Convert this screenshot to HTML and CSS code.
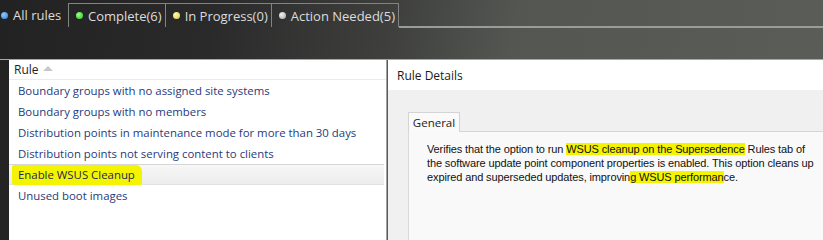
FILE: index.html
```html
<!DOCTYPE html>
<html>
<head>
<meta charset="utf-8">
<link rel="stylesheet" href="styles.css">
</head>
<body>
<div class="app">
  <div class="strip">
    <div class="tab tab-first"><span class="dot dot-blue"></span>All rules</div>
    <div class="tab tab-boxed"><span class="dot dot-green"></span>Complete(6)</div>
    <div class="tab tab-boxed"><span class="dot dot-yellow"></span>In Progress(0)</div>
    <div class="tab tab-boxed"><span class="dot dot-gray"></span>Action Needed(5)</div>
    <div class="strip-fill"></div>
  </div>
  <div class="band"></div>
  <div class="main">
    <div class="gutter"></div>
    <div class="list">
      <div class="list-head">Rule <span class="sort"></span></div>
      <div class="row">Boundary groups with no assigned site systems</div>
      <div class="row">Boundary groups with no members</div>
      <div class="row">Distribution points in maintenance mode for more than 30 days</div>
      <div class="row">Distribution points not serving content to clients</div>
      <div class="row row-selected"><span class="mark mark-row">Enable WSUS Cleanup</span></div>
      <div class="row">Unused boot images</div>
    </div>
    <div class="details">
      <div class="details-head">Rule Details</div>
      <div class="details-body">
        <div class="gtabs">
          <div class="gtab">General</div>
          <div class="gtab-fill"></div>
        </div>
        <div class="gcontent">
          <p class="desc">Verifies that the option to run <span class="mark">WSUS cleanup on the Supersedence</span> Rules tab of<br>the software update point component properties is enabled. This option cleans up<br>expired and superseded updates, improvin<span class="mark">g WSUS performan</span>ce.</p>
        </div>
      </div>
    </div>
  </div>
</div>
</body>
</html>
```

FILE: styles.css
```css
html, body {
  margin: 0;
  padding: 0;
}
body {
  width: 823px;
  height: 100vh;
  overflow: hidden;
  background: linear-gradient(100deg, #222222 0%, #2a2a2a 25%, #3e3f3d 45%, #535651 60%, #5a5d58 100%);
  font-family: "Open Sans", "Noto Sans", sans-serif;
}
.app {
  display: flex;
  flex-direction: column;
  height: 100%;
}
.strip {
  display: flex;
  height: 27px;
  padding-top: 3px;
  box-sizing: border-box;
  flex: none;
}
.tab {
  display: flex;
  align-items: center;
  gap: 5px;
  padding: 0 3px 0 7px;
  color: #dcdcdc;
  font-size: 13px;
  height: 24px;
  box-sizing: border-box;
  white-space: nowrap;
}
.tab-first {
  margin-left: -5px;
  width: 74px;
  padding-left: 6px;
}
.tab-boxed {
  border: 1px solid #838383;
  border-bottom: none;
  margin-left: -1px;
}
.strip-fill {
  flex: 1;
  border-bottom: 2px solid #9a9c98;
  margin-bottom: -1px;
}
.dot {
  width: 7px;
  height: 7px;
  border-radius: 50%;
  flex: none;
}
.dot-blue { background: radial-gradient(circle at 35% 35%, #8fc7ff, #2f7fd0); }
.dot-green { background: radial-gradient(circle at 35% 35%, #9cff8a, #25c41f); }
.dot-yellow { background: radial-gradient(circle at 35% 35%, #fffbb0, #d4c94a); }
.dot-gray { background: radial-gradient(circle at 35% 35%, #f2f2f2, #a3a3a3); }

.band {
  height: 32px;
  flex: none;
}
.main {
  display: flex;
  flex: 1;
  border-top: 1px solid #a6a8a4;
  min-height: 0;
}
.gutter {
  width: 9px;
  flex: none;
}
.list {
  width: 377px;
  flex: none;
  background: #fff;
  border-right: 1px solid #a0a0a0;
  overflow: hidden;
}
.list-head {
  height: 19px;
  border-bottom: 1px solid #ebebeb;
  padding-left: 5px;
  display: flex;
  align-items: center;
  gap: 4px;
  font-size: 12px;
  color: #1e1e1e;
}
.sort {
  width: 0;
  height: 0;
  border-left: 5px solid transparent;
  border-right: 5px solid transparent;
  border-bottom: 5px solid #c8c8c8;
  margin-top: -2px;
}
.row {
  height: 21px;
  display: flex;
  align-items: center;
  padding-left: 9px;
  font-size: 11.4px;
  color: #1f3b7c;
  white-space: nowrap;
  box-sizing: border-box;
}
.row-selected {
  background: linear-gradient(#f7f7f7, #ececec);
  border-top: 1px solid #d6d6d6;
  border-bottom: 1px solid #e2e2e2;
  margin-right: 2px;
  padding-left: 3px;
  color: #1a2a55;
}
.mark {
  background: #f4f400;
}
.mark-row {
  padding: 2px 7px 3px 6px;
  border-radius: 2px 6px 2px 3px;
}
.details {
  flex: 1;
  display: flex;
  flex-direction: column;
  background: #f0f0f0;
  border-left: 1px solid #5a5a5a;
  overflow: hidden;
}
.details-head {
  height: 30px;
  background: #fff;
  display: flex;
  align-items: center;
  padding-left: 9px;
  font-size: 12px;
  color: #1a1a1a;
  flex: none;
}
.details-body {
  padding: 22px 0 0 20px;
  flex: 1;
  display: flex;
  flex-direction: column;
  min-height: 0;
}
.gtabs {
  display: flex;
  height: 20px;
  flex: none;
}
.gtab {
  width: 52px;
  box-sizing: border-box;
  border: 1px solid #d4d4d4;
  border-bottom: none;
  background: #fafafa;
  font-size: 11.5px;
  color: #1a1a1a;
  display: flex;
  align-items: center;
  justify-content: center;
}
.gtab-fill {
  flex: 1;
  border-bottom: 1px solid #d4d4d4;
}
.gcontent {
  flex: 1;
  background: #f9f9f9;
  border-left: 1px solid #d9d9d9;
  padding: 10px 0 0 18px;
}
.desc {
  margin: 0;
  font-family: "Liberation Sans", Arial, sans-serif;
  font-size: 11px;
  line-height: 14px;
  color: #111;
  letter-spacing: -0.12px;
  white-space: nowrap;
}
```
